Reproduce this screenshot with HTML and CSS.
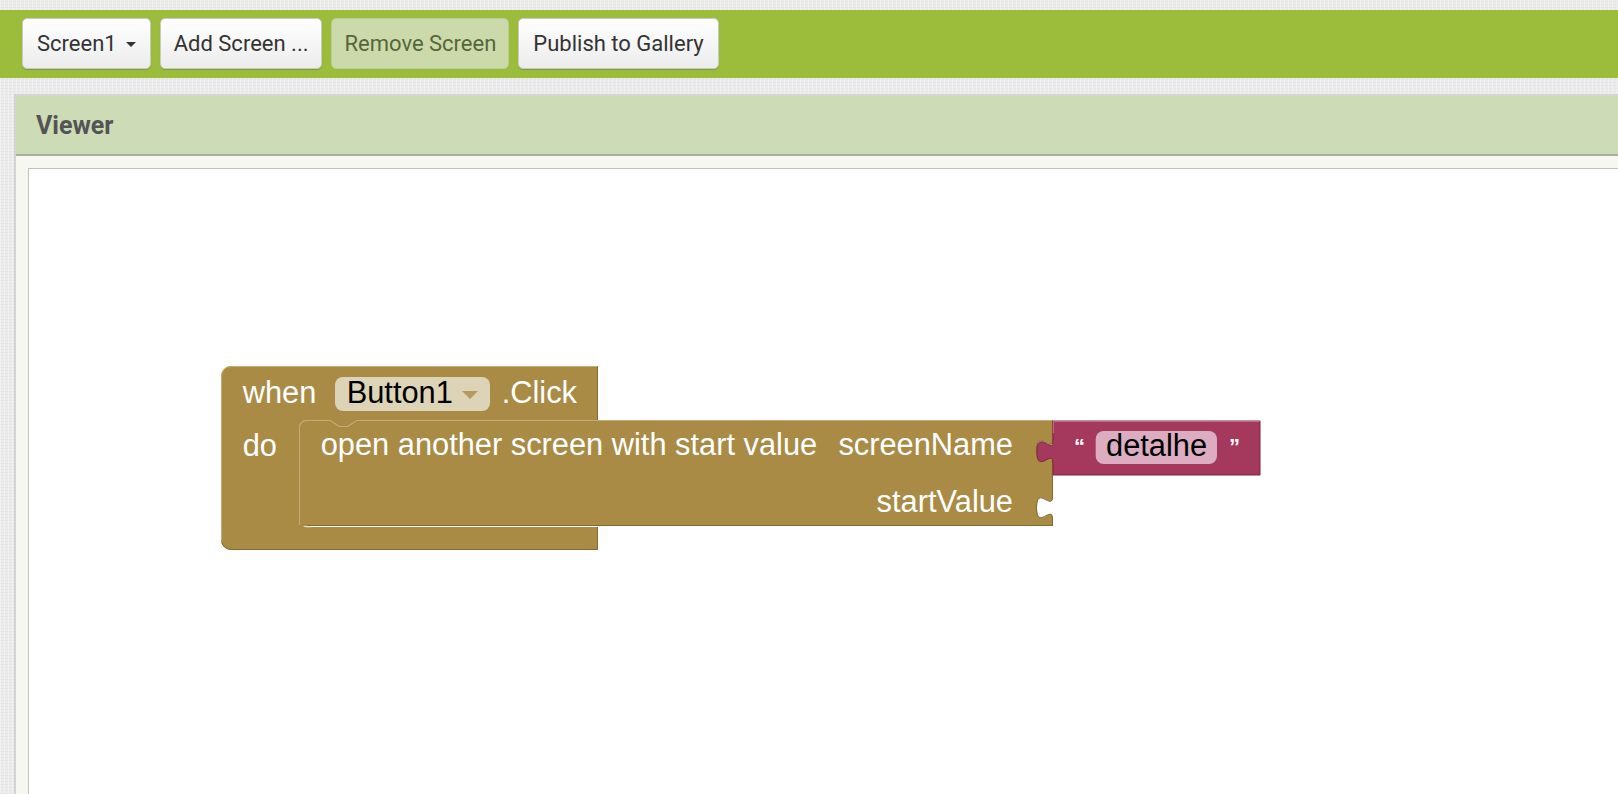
FILE: index.html
```html
<!DOCTYPE html>
<html>
<head>
<meta charset="utf-8">
<title>Viewer</title>
<link rel="stylesheet" href="styles.css">
</head>
<body>
<div class="page">
  <div class="toolbar">
    <button class="btn">Screen1 <span class="caret"></span></button>
    <button class="btn btn-tight">Add Screen ...</button>
    <button class="btn btn-disabled">Remove Screen</button>
    <button class="btn">Publish to Gallery</button>
  </div>
  <div class="viewer">
    <div class="viewer-header">Viewer</div>
    <div class="viewer-body">
      <div class="workspace">
        <svg class="blocks" width="1600" height="700" xmlns="http://www.w3.org/2000/svg">
          <g transform="translate(192 197)">
            <!-- outer event block -->
            <path class="brown" d="M 0 10 A 10 10 0 0 1 10 0 H 377 V 54 H 136 L 127 60 H 118 L 109 54 H 86 A 8 8 0 0 0 78 62 V 153 A 8 8 0 0 0 86 161 H 377 V 184 H 10 A 10 10 0 0 1 0 174 Z"/>
            <path class="hl-brown" d="M 0.5 174 V 10 A 9.5 9.5 0 0 1 10 0.5 H 376.5"/>
            <path class="sh-brown" d="M 376.5 0.5 V 54"/>
            <path class="sh-brown" d="M 376.5 161 V 183.5 H 10 A 9.5 9.5 0 0 1 0.8 176"/>
            <path class="hl-brown" d="M 78.5 62 V 153"/>
            <path class="hl-strong" d="M 79 153 A 7.5 7.5 0 0 0 86 160.5 H 90"/>
            <text class="btxt" x="21.7" y="37">when</text>
            <rect class="pill-brown" x="114" y="11" width="155" height="34" rx="8"/>
            <text class="ptxt" x="125.7" y="37">Button1</text>
            <path class="tri" d="M 241 25 H 257 L 249 33 Z"/>
            <text class="btxt" x="280.7" y="37">.Click</text>
            <text class="btxt" x="21.7" y="90">do</text>
            <!-- inner statement block -->
            <g transform="translate(78 54)">
              <path class="brown-flat" d="M 0 8 A 8 8 0 0 1 8 0 H 31 L 40 6 H 49 L 58 0 H 754 V 12 v 7.5 c 0 15 -16 -12 -16 11.25 s 16 -3.75 16 11.25 V 69 v 7.5 c 0 15 -16 -12 -16 11.25 s 16 -3.75 16 11.25 V 106 H 0 Z"/>
              <path class="hl-brown" d="M 0.5 105 V 8 A 7.5 7.5 0 0 1 8 0.5 H 31 L 40 6.5 H 49 L 58 0.5 H 753.5"/>
              <path class="sh-brown" d="M 753.5 0.5 V 12 v 7.5 c 0 15 -16 -12 -16 11.25 s 16 -3.75 16 11.25 V 69 v 7.5 c 0 15 -16 -12 -16 11.25 s 16 -3.75 16 11.25 V 105.5 H 8"/>
              <text class="btxt" x="21.7" y="35.3">open another screen with start value</text>
              <text class="btxt" x="714" y="35.3" text-anchor="end">screenName</text>
              <text class="btxt" x="714" y="92" text-anchor="end">startValue</text>
            </g>
            <!-- text block -->
            <g transform="translate(832 55)">
              <path class="red" d="M 0 0 H 207 V 54 H 0 V 42 c 0 -15 -16 12 -16 -11.25 s 16 3.75 16 -11.25 Z"/>
              <path class="hl-red" d="M 0.5 12 V 0.5 H 206.5"/>
              <text class="qtxt" x="21" y="33">“</text>
              <rect class="pill-red" x="42.7" y="10" width="121.3" height="33" rx="8"/>
              <text class="ptxt" x="53" y="35.3">detalhe</text>
              <text class="qtxt" x="176" y="33">”</text>
            </g>
          </g>
        </svg>
      </div>
    </div>
  </div>
</div>
</body>
</html>
```
FILE: styles.css
```css
html, body {
  margin: 0;
  padding: 0;
}
body {
  background-color: #ebebeb;
  background-image:
    repeating-linear-gradient(0deg, rgba(0, 0, 0, 0.025) 0 1px, transparent 1px 3px),
    repeating-linear-gradient(90deg, rgba(255, 255, 255, 0.35) 0 1px, transparent 1px 4px);
  font-family: Roboto, "Liberation Sans", sans-serif;
  overflow: hidden;
  width: 1618px;
  height: 794px;
}
.page {
  padding-top: 10px;
}
.toolbar {
  background: #9cbd3b;
  height: 68px;
  box-sizing: border-box;
  padding: 8px 0 0 22px;
  display: flex;
  align-items: flex-start;
  gap: 9px;
}
.btn {
  height: 51px;
  box-sizing: border-box;
  padding: 0 14px;
  border: 1px solid #c9c9c9;
  border-radius: 5px;
  background: linear-gradient(#ffffff, #ececec);
  box-shadow: 0 1px 1px rgba(0, 0, 0, 0.18);
  font-family: Roboto, "Liberation Sans", sans-serif;
  font-size: 22px;
  color: #333;
  display: flex;
  align-items: center;
  gap: 9px;
}
.btn-tight {
  padding: 0 13px;
}
.btn-disabled {
  padding: 0 12px;
  background: #ccdaab;
  border-color: #bccb99;
  color: #56663a;
  box-shadow: none;
}
.caret {
  width: 0;
  height: 0;
  border-left: 5.5px solid transparent;
  border-right: 5.5px solid transparent;
  border-top: 5px solid #333;
  margin-top: 2px;
}
.viewer {
  margin: 16px 0 0 14px;
  border-top: 2px solid #d3d3d3;
  border-left: 2px solid #d3d3d3;
  background: #f5f7f0;
}
.viewer-header {
  height: 58px;
  background: #cedbb7;
  border-bottom: 2px solid #a9ae9f;
  padding-left: 20px;
  display: flex;
  align-items: center;
  font-family: Roboto, "Liberation Sans", sans-serif;
  font-weight: bold;
  font-size: 25px;
  color: #545454;
}
.viewer-body {
  padding: 12px 0 0 12px;
}
.workspace {
  position: relative;
  height: 700px;
  background: #ffffff;
  border-top: 1px solid #c2c2c2;
  border-left: 1px solid #c2c2c2;
}
.blocks {
  position: absolute;
  left: 0;
  top: 0;
}
.brown,
.brown-flat {
  fill: #a98b45;
  stroke: none;
}
.hl-brown {
  fill: none;
  stroke: #c4ac76;
  stroke-width: 1;
}
.hl-strong {
  fill: none;
  stroke: #efe6d2;
  stroke-width: 1.5;
}
.sh-brown {
  fill: none;
  stroke: #836a31;
  stroke-width: 1;
}
.red {
  fill: #a5395d;
  stroke: #7d2545;
  stroke-width: 1;
}
.hl-red {
  fill: none;
  stroke: #c46a89;
  stroke-width: 1;
}
.btxt {
  font-family: "Liberation Sans", Arial, sans-serif;
  font-size: 30.8px;
  fill: #ffffff;
}
.ptxt {
  font-family: "Liberation Sans", Arial, sans-serif;
  font-size: 30.8px;
  fill: #000000;
}
.qtxt {
  font-family: "Liberation Sans", Arial, sans-serif;
  font-size: 22px;
  font-weight: bold;
  fill: #ffffff;
}
.pill-brown {
  fill: #ddd3b6;
}
.pill-red {
  fill: #dcadc0;
}
.tri {
  fill: #b39a62;
}
```
